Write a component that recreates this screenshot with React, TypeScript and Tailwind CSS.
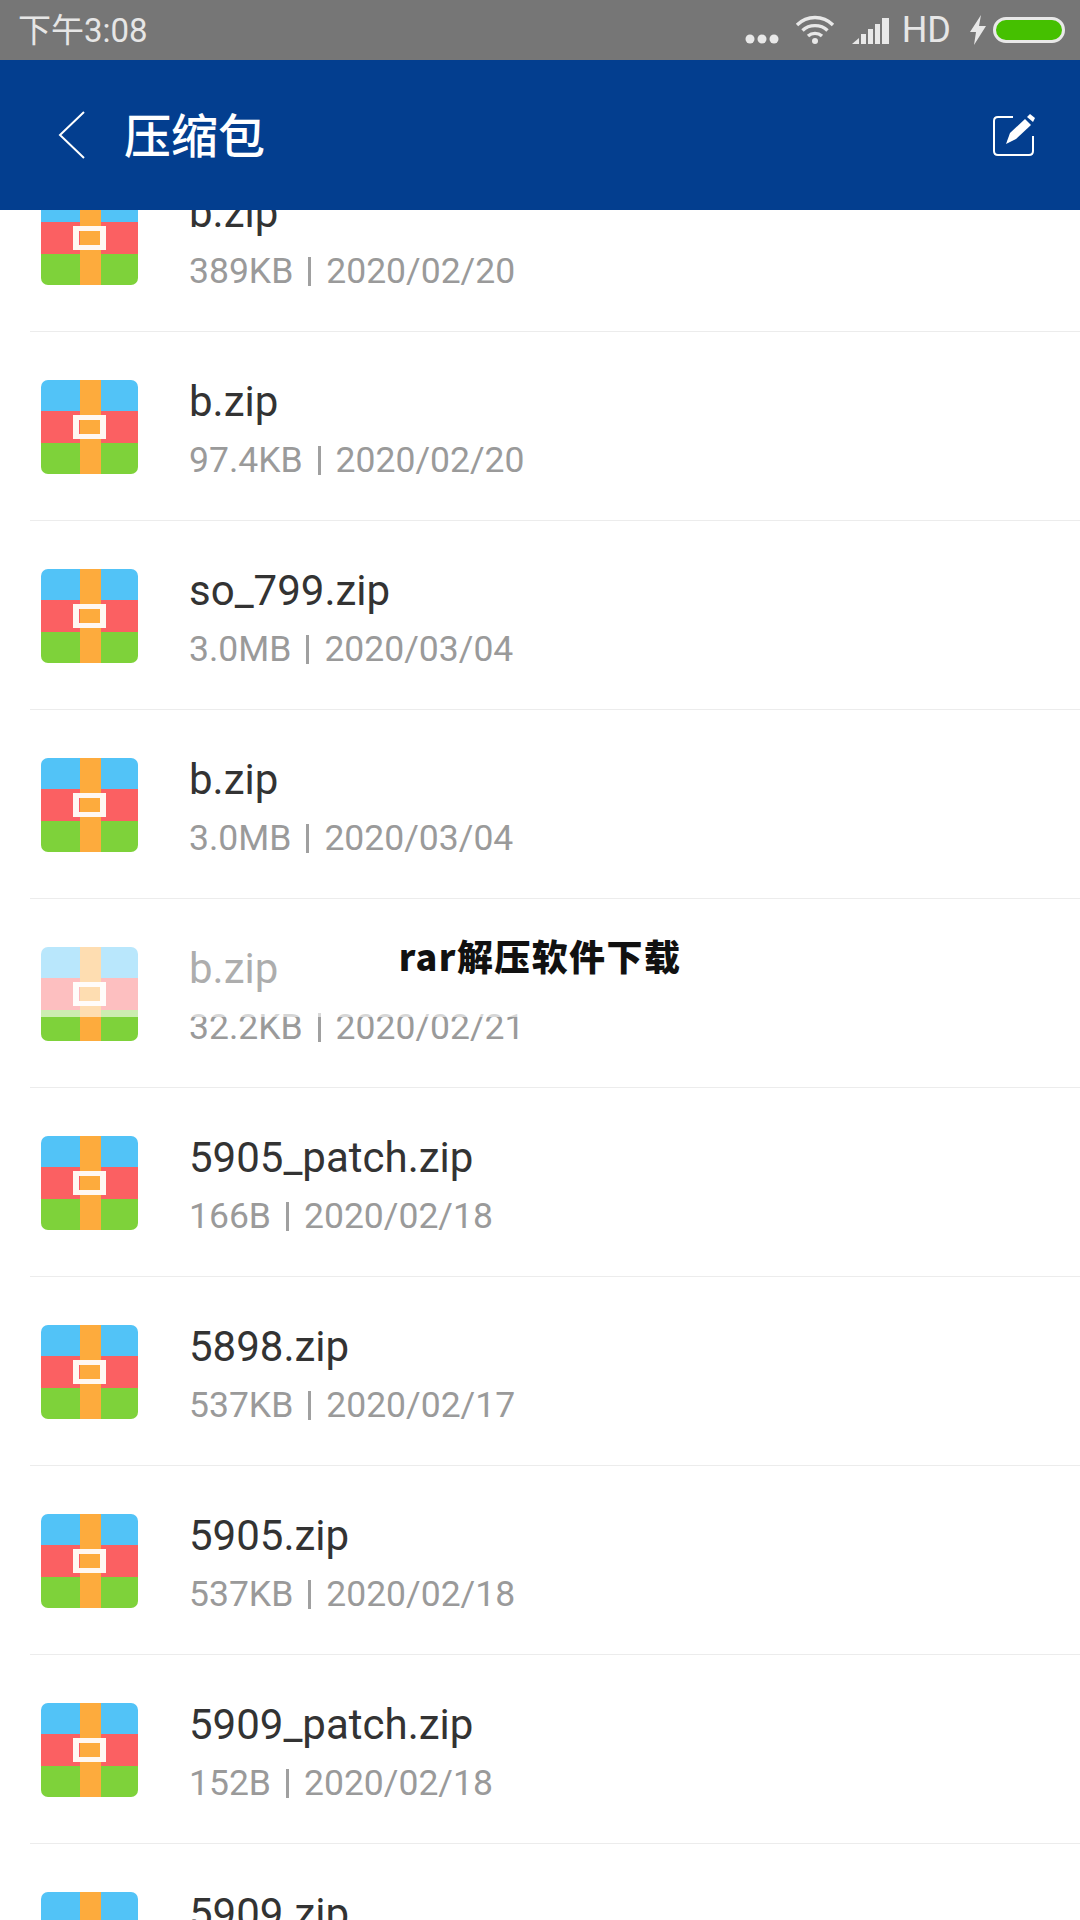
const FILES = [
  { name: 'b.zip', meta: '389KB', date: '2020/02/20' },
  { name: 'b.zip', meta: '97.4KB', date: '2020/02/20' },
  { name: 'so_799.zip', meta: '3.0MB', date: '2020/03/04' },
  { name: 'b.zip', meta: '3.0MB', date: '2020/03/04' },
  { name: 'b.zip', meta: '32.2KB', date: '2020/02/21' },
  { name: '5905_patch.zip', meta: '166B', date: '2020/02/18' },
  { name: '5898.zip', meta: '537KB', date: '2020/02/17' },
  { name: '5905.zip', meta: '537KB', date: '2020/02/18' },
  { name: '5909_patch.zip', meta: '152B', date: '2020/02/18' },
  { name: '5909.zip' },
]

function ZipIcon() {
  return (
    <div className="relative mt-[6px] flex h-[94px] w-[97px] shrink-0 flex-col overflow-hidden rounded-[7px]">
      <div className="h-[31px] bg-[#52c3f7]" />
      <div className="h-[32px] bg-[#fb6062]" />
      <div className="h-[31px] bg-[#7ed23a]" />
      <div className="absolute inset-y-0 left-[39px] w-[21px] bg-[#fdab3d]" />
      <div className="absolute left-[32px] top-[35px] h-[24px] w-[33px] border-x-[6px] border-y-[5px] border-[#fff8f2]" />
    </div>
  )
}

function FileRow({ name, meta, date }: { name: string; meta?: string; date?: string }) {
  return (
    <div className="flex h-[189px] items-start border-b border-[#ececec] pl-[11px] pt-[42px]">
      <ZipIcon />
      <div className="ml-[51px] flex flex-col">
        <span className="text-[42px] leading-[56px] text-[#333333]">{name}</span>
        {meta && (
          <span className="mt-[6px] flex items-center text-[35.5px] leading-[48px] text-[#9a9a9a]">
            {meta}
            <span className="mx-[15px] h-[29px] w-[3px] bg-[#a0a0a0]" />
            {date}
          </span>
        )}
      </div>
    </div>
  )
}

export default function App() {
  return (
    <div className="relative flex h-[1920px] w-[1080px] flex-col overflow-hidden bg-white font-['Roboto','Noto_Sans_CJK_SC',sans-serif]">
      <div className="relative z-10 flex h-[60px] shrink-0 items-center justify-between bg-[#767676] pl-[18px] pr-[15px] text-[#e6e6e6]">
        <span className="text-[33px] leading-none">下午3:08</span>
        <div className="flex items-center">
          <svg width="34" height="10" viewBox="0 0 34 10" className="mt-[18px]" fill="#e8e8e8">
            <circle cx="5" cy="5" r="4.5" />
            <circle cx="17" cy="5" r="4.5" />
            <circle cx="29" cy="5" r="4.5" />
          </svg>
          <svg width="40" height="30" viewBox="0 0 40 30" className="ml-[16px] mb-[1px]" fill="none" stroke="#e8e8e8" strokeWidth="3.4">
            <path d="M2 10 C12 0 28 0 38 10" />
            <path d="M7.5 15.5 C14 9 26 9 32.5 15.5" />
            <path d="M13 21 C17 17.5 23 17.5 27 21" />
            <circle cx="20" cy="26" r="3" fill="#e8e8e8" stroke="none" />
          </svg>
          <svg width="38" height="26" viewBox="0 0 38 26" className="ml-[17px] mt-[2px]" fill="#e8e8e8">
            <path d="M0 26 L7 20 V26 Z" />
            <rect x="9" y="16" width="5" height="10" />
            <rect x="16" y="11" width="5" height="15" />
            <rect x="23" y="6" width="5" height="20" />
            <rect x="30" y="0" width="7" height="26" />
          </svg>
          <span className="ml-[12px] text-[36px] leading-none">HD</span>
          <svg width="18" height="30" viewBox="0 0 18 30" className="ml-[18px]" fill="#e8e8e8">
            <path d="M12 0 L1 17 H7 L5 30 L17 11 H10 Z" />
          </svg>
          <div className="ml-[6px] h-[26px] w-[72px] rounded-full border-[3px] border-[#e8e8e8] bg-[#45c000]" />
        </div>
      </div>

      <div className="relative z-10 flex h-[150px] shrink-0 items-center justify-between bg-[#033e8f] pl-[58px] pr-[44px]">
        <div className="flex items-center">
          <svg width="27" height="48" viewBox="0 0 27 48" fill="none" stroke="#ffffff" strokeWidth="2">
            <path d="M26 1 L2 24 L26 47" />
          </svg>
          <span className="ml-[39px] mt-[2px] text-[47px] font-medium leading-none text-white">压缩包</span>
        </div>
        <svg width="44" height="44" viewBox="0 0 44 44" fill="none">
          <path d="M21 4 H6 Q2 4 2 8 V38 Q2 42 6 42 H37 Q41 42 41 38 V23" stroke="#ffffff" strokeWidth="2" />
          <path d="M14 31 L18 20 L33 6 L39 12 L24 26 Z" fill="#ffffff" />
          <path d="M35 4 L38 1 L43 5 L41 9 Z" fill="#ffffff" />
        </svg>
      </div>

      <div className="-mt-[67px] pl-[30px]">
        {FILES.map((f, i) => (
          <FileRow key={i} {...f} />
        ))}
      </div>

      {/* watermark sits over the list and washes out the row under it */}
      <div className="absolute left-0 top-[916px] flex h-[101px] w-full items-start justify-center bg-white/60 pt-[17px]">
        <span className="text-[36px] font-black leading-[44px] tracking-[1.4px] text-[#111111] font-['Noto_Sans_CJK_SC',sans-serif]">rar解压软件下载</span>
      </div>
    </div>
  )
}
